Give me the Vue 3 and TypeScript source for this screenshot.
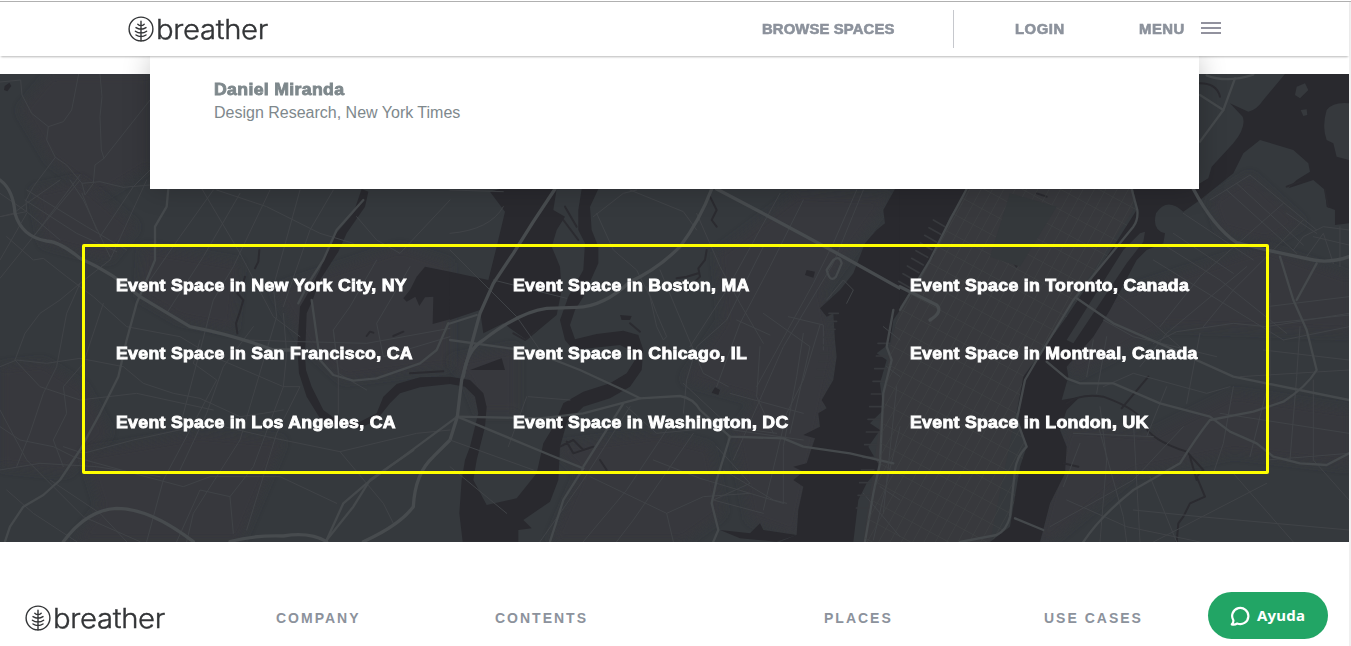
<script setup lang="ts">
interface Layer {
  id: string
  transform: string
  patches: string[]
  water: string[]
  creeks: string[]
  islands: string[]
  streets: string[]
  roads: string[]
  highways: string[]
}

const columns: string[][] = [
  ['Event Space in New York City, NY', 'Event Space in San Francisco, CA', 'Event Space in Los Angeles, CA'],
  ['Event Space in Boston, MA', 'Event Space in Chicago, IL', 'Event Space in Washington, DC'],
  ['Event Space in Toronto, Canada', 'Event Space in Montreal, Canada', 'Event Space in London, UK'],
]

const footerLinks = [
  { label: 'COMPANY', cls: 'company' },
  { label: 'CONTENTS', cls: 'contents' },
  { label: 'PLACES', cls: 'places' },
  { label: 'USE CASES', cls: 'cases' },
]

const leafPath =
  'M13 5.2V25M9.8 8.2Q11.2 9.6 13 9.6Q14.8 9.6 16.2 8.2M8 11.6Q10.2 13.2 13 13.2Q15.8 13.2 18 11.6M7.4 15.2Q9.8 17 13 17Q16.2 17 18.6 15.2M8 19Q10.2 20.6 13 20.6Q15.8 20.6 18 19'

const layers: Layer[] = [
  {
    id: 'northwest',
    transform: 'translate(0 50) scale(.33333)',
    patches: ['M150 72H450V350L300 440L150 330L60 180Z'],
    water: ['M14 108L28 98L34 108L22 124L12 120Z'],
    creeks: [],
    islands: [],
    streets: [
      'M0 96L62 90L66 135L95 190L145 230L190 215L215 180L236 72',
      'M300 72L306 140L300 200L304 300L312 325L285 345L280 400L255 435L246 400L200 345L166 322L140 270L145 230',
      'M312 325L450 150', 'M166 322L100 410L78 450L80 485', 'M240 375L100 560', 'M246 400L300 395L370 412L450 405',
      'M450 360L400 410L300 560', 'M80 420L260 530L380 600', 'M0 430L80 485L180 570', 'M0 500L80 485', 'M246 430L290 540',
    ],
    roads: [],
    highways: [],
  },
  {
    id: 'west',
    transform: 'translate(0 180) scale(.33333)',
    patches: [
      'M100 30L240 0L410 140L330 240L130 190Z', 'M430 200L720 250L700 450L540 420L420 350Z',
      'M0 560L130 545L250 620L330 760L200 880L0 860Z', 'M250 820L600 760L850 780L720 1085H220L300 980Z', 'M820 330L1200 200L1350 250V560L1030 600L920 500Z',
    ],
    water: [
      'M1275 260L1350 275V418L1298 432L1300 350L1275 352L1258 378L1246 350L1220 365L1210 355L1230 330L1250 290Z',
      'M1085 27L1105 35L1095 80L1040 160L1015 215L960 300L938 360L920 400L915 530L918 570L935 620L970 690L1010 720L1080 725L1130 700L1150 650L1190 612L1260 592L1350 590V612L1260 622L1200 640L1170 670L1130 720L1080 745L1010 740L960 715L920 650L897 580L892 500L900 380L918 350L960 270L1000 170L1060 100Z',
    ],
    creeks: ['M778 210L775 245L765 265', 'M735 290L725 325L712 340L730 360L720 395L708 430L712 460', 'M1100 468L1110 455L1120 458M1180 468L1210 455', 'M1230 580L1330 574'],
    islands: [],
    streets: [
      'M0 110L40 100L80 70L180 0', 'M20 170L100 240L130 235L200 290L280 350L380 440L540 470L640 530L850 620', 'M0 295L100 170L240 0',
      'M75 60L230 160L350 215', 'M80 100L0 240', 'M210 0L250 60L330 230', 'M0 560L50 540L140 550L240 535L370 560L430 610L520 640L600 655L720 710L790 700L850 690',
      'M45 540L75 460L120 400L180 360L240 310L330 240L440 0', 'M45 540L120 620L240 660L410 640L640 690', 'M240 310L200 400L170 560L130 640L90 760L50 860', 'M310 370L250 550L190 620L200 700L160 780L190 860',
      'M0 740L60 780L160 800L220 830L400 880L550 920L630 890L840 890L1010 970', 'M190 800L250 820L400 780L630 730L800 770L1020 815L1250 760L1350 750', 'M0 870L120 850L290 860L480 890', 'M0 690L80 840L250 1010L420 1085', 'M20 930L100 1000L230 1085', 'M150 900L300 1000L380 1085',
      'M590 0L720 220L820 410L900 470', 'M640 30L540 170L450 300', 'M720 40L610 230L500 400', 'M650 30L800 80L960 160L1060 190', 'M810 30L700 260L640 360L540 740', 'M900 30L820 320L830 410L800 510L720 780L580 1000L560 1085',
      'M1000 30L930 150L850 380', 'M1070 110L1130 180L1200 220L1350 60', 'M600 480L580 550L650 600L490 900L440 1085', 'M850 400L860 520L850 620L760 860L690 950L700 1060', 'M760 440L670 560L620 700L540 870', 'M850 620L900 620L830 760L740 1050', 'M1000 450L1015 570V700', 'M1130 240L1050 380L1000 450L1015 580L1100 630', 'M1230 260L1130 430L1150 530L1350 470', 'M740 480L900 485L1100 490L1350 445', 'M1020 815L1150 970L1180 1030', 'M690 950L600 930L530 1085',
    ],
    roads: [
      'M505 27L500 80L465 140L465 240L440 300L410 370L380 480L355 590L300 700L240 810L180 900L130 945L70 980L30 1040L15 1085', 'M935 360L960 540L1000 585L1060 602L1130 595L1260 550L1310 510L1345 430',
      'M1090 60L1010 150L970 240L925 310L895 370', 'M980 1080L1030 970L1100 910L1210 830L1372 710', 'M980 1080L1060 980L1110 900L1240 810',
    ],
    highways: [
      'M0 0Q40 30 45 100Q65 170 140 183Q180 185 240 235Q340 280 420 350L570 440Q700 465 820 510H900', 'M190 1085Q260 990 350 985Q450 985 580 1085', 'M690 1085Q760 1065 850 1068Q930 1055 980 1085', 'M1090 1085Q1200 1035 1240 980Q1245 880 1300 830L1350 780L1372 710',
    ],
  },
  {
    id: 'center',
    transform: 'translate(450 180) scale(.33333)',
    patches: [
      'M800 220L1040 40L1320 50L1120 330L1160 520L1040 1070L900 1020L850 760L920 660L700 600L820 420Z', 'M310 800L620 760L780 800L820 1000L700 1085H300L390 880Z', 'M0 540L200 500L200 700L90 700L50 600Z',
    ],
    water: [
      'M120 35L150 27H320L310 90L345 110L320 150L305 200L330 260L335 330L320 405L230 480L160 430L100 460L90 390L0 420V275L115 300L140 200L165 95Z',
      'M395 27H445L420 80L425 150L445 200V250L400 350L375 390L360 435L375 478L440 462L520 452L565 465L580 510L575 570L540 620L480 655L400 680L350 730L330 800L325 900L300 965L220 1020L245 1045L205 1050V1085H38L28 1000L35 900L45 840L60 800L85 700L75 650L45 620L0 612V590L60 600L100 640L110 680L105 740L80 840L70 900L110 975L200 955L260 880L280 790L310 740L340 670L400 635L480 610L530 580L555 540L540 510L510 495L370 510L345 480L330 420L355 350L400 270L405 190L385 150V90Z',
      'M1350 27H1335L1300 90L1305 130L1280 150L1245 190L1210 280L1170 330L1110 385L1130 410L1150 400L1155 480L1160 530L1150 600L1115 660L1130 685L1105 700L1110 740L1060 765L1095 775L1070 850L1030 860L1060 875L1030 900L1060 920L1045 990L1040 1065L990 1085H1210L1225 960L1250 910L1290 860L1255 800L1290 750L1260 730L1300 690L1290 610L1310 540L1280 520L1320 490L1330 420L1350 390Z',
      'M60 570L155 535L165 570Z', 'M1070 270L1095 275L1090 293L1065 285Z', 'M795 622L810 630L805 645L785 638Z', 'M510 405L545 408L540 420L515 420Z',
      'M810 1050L900 1060L930 1030L940 1050L1040 1065L980 1085L870 1075Z',
    ],
    creeks: ['M780 50L800 90L785 120L800 140', 'M770 210L765 240L745 265L750 290L720 320M745 280L710 290L680 295', 'M330 800L370 780L400 810L430 800L370 820L350 785', 'M340 120L385 180M345 80L380 140', 'M450 840L470 870', 'M190 460L225 480L260 450', 'M540 430L570 455'],
    islands: [],
    streets: [
      'M0 30L160 35M0 160Q120 150 160 80', 'M0 210L200 410L270 510', 'M130 300L350 355', 'M430 110L520 40L560 30', 'M440 100L490 210L560 270L600 350L620 440L640 480L650 470L620 400L590 320', 'M540 30L700 95L740 150', 'M740 100L810 260L870 370L940 490', 'M630 270L680 390L760 580L835 620', 'M940 200L830 420L740 500L710 600L700 700', 'M1060 60L960 260L870 430L800 620', 'M990 40L830 330L720 500', 'M1220 30L1150 190L1090 310L920 620', 'M1240 30L1150 250L1000 500L850 840', 'M860 420L960 465', 'M1015 410L1120 435V510', 'M1110 435L1060 600L1010 700L940 990', 'M1060 460L1040 590L1000 800V970', 'M940 400L1080 500L1020 760', 'M930 500L920 650L970 760', 'M840 640L1060 700', 'M700 610L850 750L1060 780', 'M540 680L400 900L270 1085', 'M650 750L530 930L400 1085', 'M730 760L550 1020L500 1085', 'M530 680L620 760L830 740L980 760', 'M610 840L750 895L1000 970', 'M820 870L970 960L1010 970', 'M420 890L650 1000L670 1085', 'M650 1000L760 950L900 940', 'M800 800L900 910L790 960L940 1000', 'M230 650L175 800', 'M0 860L170 1000M0 780L250 870', 'M235 650L360 660', 'M1130 360L1180 300L1210 330L1190 370', 'M1300 440L1350 480M1310 560L1350 590M1290 920L1350 960M1240 940L1350 1070', 'M1340 620L1300 1000M1350 740L1270 1080',
    ],
    roads: [
      'M-5 432L80 405', 'M20 710L270 715L400 700L570 655L690 648Q730 655 750 690L840 770L1000 775L1060 800L1200 820L1330 850', 'M22 710L180 775L300 825L400 865L340 960L300 1085', 'M840 770L800 900L785 970L805 1050L790 1085', 'M520 670L400 860', 'M1330 390L1310 500L1325 540L1300 640L1290 850L1270 940L1245 1085', 'M1130 270Q1140 310 1158 290L1175 250Q1170 225 1150 240Z', 'M0 480L250 515L390 570L520 630L570 655',
    ],
    highways: [
      'M315 27L250 125L190 220L130 310L90 400L60 510L35 600L22 710', 'M785 27Q750 120 690 200Q620 270 540 305Q460 380 380 382L290 385Q210 395 100 480Q50 510 40 590', 'M800 27L920 90L1050 160L1180 230L1350 325',
    ],
  },
  {
    id: 'east',
    transform: 'translate(900 60) scale(.33333)',
    patches: [
      'M600 720L1090 560L1350 650V820L800 800L520 950L500 900Z', 'M500 1100L760 1120L1000 1000L1350 1050V1220L1000 1180L700 1240L450 1446H410Z', 'M930 420L1050 345L1210 490L1100 550L960 510Z',
    ],
    water: [
      'M1155 42H1347V490L1305 495V450L1280 440L1275 390L1240 360L1165 385L1190 360L1230 335L1225 310L1180 270L1080 240L1030 280L1000 340L900 420L850 455Q800 410 768 460Q755 510 795 520L790 550L740 570L710 600L630 750L580 830L500 920L505 950L485 1020L540 1010L500 1050L480 1110L500 1160L495 1240L450 1330L420 1446H270L330 1400L360 1220L380 1160L350 1060L370 950L500 770L640 560L710 450L700 387H860L900 370L925 355L935 320L1000 250Q1040 200 1028 170L990 130L1045 155Q1070 150 1090 120Z',
      'M0 387H205L150 470L100 590L0 740Z',
    ],
    creeks: ['M900 70Q950 70 960 110', 'M500 1030Q540 1000 610 1010Q720 1050 730 1090Q750 1140 860 1175L910 1230L890 1250L915 1310L870 1330L850 1370L835 1390L830 1446', 'M665 1045Q720 980 745 950', 'M360 430L380 460L430 480', 'M410 400L440 410', 'M490 1210L535 1220', 'M350 590V620L335 600', 'M1160 380L1200 365', 'M1275 390L1285 440', 'M870 1190L890 1260'],
    islands: ['M1190 80L1215 70L1225 90L1200 115L1185 105Z', 'M1202 150L1220 148L1222 165L1210 168Z', 'M1347 130Q1300 125 1280 150Q1265 200 1280 240L1300 250L1310 290L1347 300Z', 'M720 520L735 515L730 545L680 610L520 850L500 840L670 570Z'],
    streets: [
      'M930 420L1050 345L1250 510', 'M1010 370L1210 555', 'M980 390L1190 580', 'M1150 430L900 650L780 800', 'M1210 480L1000 690L910 800', 'M850 460L1060 600M820 520L1000 640', 'M800 560L960 660L1160 820', 'M760 600L1020 760L1150 840', 'M1040 620L800 820L720 920', 'M650 700L760 790L850 870', 'M610 780L700 830L950 890', 'M580 840L560 950M620 830L590 1000', 'M760 850L830 815L1000 790L1100 800L1347 760', 'M900 820L860 1030', 'M1100 740L1347 710', 'M1110 790L1347 765', 'M1150 840L1347 800', 'M1090 870L1347 900', 'M1020 950L1347 930', 'M1110 700V950L1050 1190', 'M1200 800L1190 950L1170 1200', 'M1240 960V1200', 'M1000 980L970 1150L940 1240', 'M960 1060L1347 1120', 'M1100 1200L1347 1180', 'M1240 1200L1347 1320', 'M520 1120L760 1130M540 1150L490 1280', 'M590 1080L670 1370L680 1446', 'M700 1080L720 1446', 'M750 1250L830 1446', 'M1100 1270L760 1446M1000 1240L1180 1446', 'M700 1350L900 1370L1347 1410', 'M500 1320L680 1400L900 1446', 'M450 1400L700 1260L850 1100', 'M600 1446L620 1200L600 1040', 'M800 980L740 1130M990 980L920 1000L700 940L610 980', 'M1180 570L1210 530L1270 500L1347 510M1220 590L1270 520L1300 610M1320 500V620', 'M1240 530L1347 555', 'M1160 460L1250 520',
    ],
    roads: [
      'M1005 55L970 150L900 245', 'M530 715L640 790L800 860L1000 950L1347 1020', 'M440 905L500 955L540 970L640 970L780 1030L930 1070L990 1115L1070 1150L1120 1190L1200 1210L1280 1215L1347 1180', 'M550 1446Q600 1370 700 1290L840 1210Q890 1130 930 1080L1060 1055L1150 1025Q1220 980 1250 930L1220 810L1180 720L1140 590', 'M1250 610L1190 720', 'M900 105L970 150', 'M920 46Q980 70 1060 44', 'M180 1446L290 1425Q320 1410 330 1370L345 1230Q350 1190 380 1160L350 1080L375 960L410 900L520 720L700 500Q715 480 712 450L695 387', 'M200 387L150 480L90 600L0 750', 'M345 1375L430 1410',
    ],
    highways: ['M880 387Q940 500 1010 548L1100 570L1240 600Q1290 610 1347 590', 'M0 680L110 735Q130 755 90 780'],
  },
]

const avenues: string[] = []
for (let x = -300; x < 1050; x += 34) avenues.push(`M${x} 387L${x - 580} 1446`)
const crossStreets: string[] = []
for (let y = 0; y < 1500; y += 62) crossStreets.push(`M-120 ${y}L720 ${y + 455}`)
const piers: string[] = []
for (let i = 0; i < 9; i++) piers.push(`M${1165 - i * 5} ${400 + i * 24}h-28`)
for (let i = 0; i < 14; i++) piers.push(`M${1322 - i * 5} ${490 + i * 38}h-38`)
const hudsonPiers: string[] = []
for (let i = 0; i < 9; i++) hudsonPiers.push(`M${135 - i * 13} ${500 + i * 23}l-35 -20`)
</script>

<template>
  <div class="page">
    <header class="header">
      <a class="logo">
        <svg class="leaf" viewBox="0 0 26 26"><circle cx="13" cy="13" r="11.9" /><path :d="leafPath" /></svg>
        <span class="word">breather</span>
      </a>
      <nav class="nav">
        <a class="browse">BROWSE SPACES</a>
        <span class="divider"></span>
        <a class="login">LOGIN</a>
        <a class="menu">MENU</a>
        <span class="burger"><i></i><i></i><i></i></span>
      </nav>
    </header>

    <main class="hero">
      <svg class="map" viewBox="0 74 1349 468" preserveAspectRatio="none">
        <defs>
          <clipPath id="manhattan">
            <path d="M205 387L150 470L100 590L0 740L-30 860L-50 1060L-65 1230L-110 1446H270L330 1400L360 1220L380 1160L350 1060L370 950L500 770L640 560L710 450L700 387Z" />
          </clipPath>
          <filter id="haze" x="-20%" y="-20%" width="140%" height="140%"><feGaussianBlur stdDeviation="14" /></filter>
        </defs>
        <rect x="0" y="74" width="1349" height="468" fill="#35393d" />
        <g v-for="l in layers" :key="'p' + l.id" :transform="l.transform">
          <path v-for="d in l.patches" :key="d" class="patch" filter="url(#haze)" :d="d" />
          <path v-if="l.id === 'east'" class="patch" d="M205 387L0 740L-30 860L-110 1446H270L370 950L700 450V387Z" />
        </g>
        <g v-for="l in layers" :key="l.id" :transform="l.transform">
          <path v-for="d in l.water" :key="d" class="water" :d="d" />
          <path v-for="d in l.islands" :key="d" class="island" :d="d" />
          <path v-for="d in l.creeks" :key="d" class="creek" :d="d" />
          <path v-for="d in l.streets" :key="d" class="street" :d="d" />
          <g v-if="l.id === 'east'" clip-path="url(#manhattan)">
            <path class="grid" :d="avenues.join('')" />
            <path class="grid" :d="crossStreets.join('')" />
            <path class="park" d="M330 400L470 440L360 620L270 590Z" />
          </g>
          <path v-if="l.id === 'east'" class="pier" :d="hudsonPiers.join('')" />
          <path v-if="l.id === 'center'" class="pier" :d="piers.join('')" />
          <path v-for="d in l.roads" :key="d" class="road" :d="d" />
          <path v-for="d in l.highways" :key="d" class="highway" :d="d" />
        </g>
      </svg>

      <section class="quote">
        <strong class="author">Daniel Miranda</strong>
        <span class="role">Design Research, New York Times</span>
      </section>

      <section class="cities">
        <ul v-for="(col, i) in columns" :key="i">
          <li v-for="city in col" :key="city">{{ city }}</li>
        </ul>
      </section>
    </main>

    <footer class="footer">
      <a class="logo">
        <svg class="leaf" viewBox="0 0 26 26"><circle cx="13" cy="13" r="11.9" /><path :d="leafPath" /></svg>
        <span class="word">breather</span>
      </a>
      <a v-for="f in footerLinks" :key="f.cls" class="flink" :class="f.cls">{{ f.label }}</a>
    </footer>

    <button class="help">
      <svg viewBox="0 0 20 20"><path d="M3.4 14.3A8.1 8.1 0 1 1 7.2 17.5Q4.8 19 1.8 18.4Q3.6 16.8 3.4 14.3Z" /></svg>
      <span>Ayuda</span>
    </button>
    <div class="gutter"></div>
  </div>
</template>

<style>
html, body { margin: 0; overflow: hidden; background: #fff; }
</style>

<style scoped>
.page { position: relative; width: 1351px; height: 646px; overflow: hidden; background: #fff; font-family: "Liberation Sans", Arial, sans-serif; box-sizing: border-box; }
.header { position: relative; z-index: 3; display: flex; height: 56px; box-sizing: border-box; border-top: 1px solid #fff; padding-left: 128px; background: #fff; width: 1349px; box-shadow: 0 2px 2px -1px rgba(0, 0, 0, .28); }
.header::before { content: ""; position: absolute; left: 0; top: 0; width: 1351px; height: 1px; background: #b0b0b0; }
.logo { display: flex; height: 26px; }
.header .logo { margin-top: 15px; width: 634px; }
.leaf { width: 26px; height: 26px; fill: none; stroke: #333537; stroke-width: 1.4; stroke-linecap: round; }
.word { margin: 0 0 0 2px; font: 300 27.5px/26px Inter, sans-serif; letter-spacing: -.3px; color: #333537; -webkit-text-stroke: .4px #333537; transform: scaleX(1.065); transform-origin: 0 0; }
.nav { display: flex; font-weight: 700; font-size: 14px; line-height: 16px; letter-spacing: .12px; color: #8c929c; -webkit-text-stroke: .6px #8c929c; }
.nav a { margin-top: 20px; white-space: nowrap; transform: scaleX(1.06); transform-origin: 0 0; }
.browse { width: 191px; }
.divider { width: 1px; height: 38px; margin-top: 9px; background: #c6c8cd; }
.login { width: 124px; margin-left: 61px; }
.menu { width: 62px; }
.nav .login, .nav .menu { letter-spacing: .5px; }
.burger { display: flex; flex-direction: column; gap: 3px; margin-top: 21px; }
.burger i { width: 20px; height: 2px; background: #92929e; }

.hero { position: relative; height: 486px; width: 1349px; }
.map { position: absolute; left: 0; top: 18px; width: 1349px; height: 468px; }
.patch { fill: #38393d; opacity: .85; }
.water { fill: #29292e; }
.island { fill: #36393d; }
.park { fill: #34383b; }
.creek, .street, .grid, .pier, .road, .highway { fill: none; stroke-linejoin: round; stroke-linecap: round; }
.creek { stroke: #2b2b30; stroke-width: 6; }
.street { stroke: #404347; stroke-width: 3; }
.grid { stroke: #404346; stroke-width: 2.4; opacity: .8; }
.pier { stroke: #37393d; stroke-width: 5; }
.road { stroke: #45494c; stroke-width: 7; }
.highway { stroke: #474b4e; stroke-width: 10; }

.quote { position: relative; display: flex; flex-direction: column; width: 1049px; height: 133px; margin-left: 150px; padding: 24px 0 0 64px; box-sizing: border-box; background: #fff; box-shadow: 0 0 26px rgba(0, 0, 0, .22); color: #7e888c; font-size: 16px; }
.author { line-height: 20px; letter-spacing: .3px; -webkit-text-stroke: .8px #7e888c; transform: scaleX(1.105); transform-origin: 0 0; }
.role { line-height: 18px; margin-top: 4px; }
.cities { position: relative; display: grid; grid-template-columns: 397px 397px 1fr; width: 1187px; height: 230px; box-sizing: border-box; border: 3px solid #ff0; border-radius: 2px; margin: 55px 0 0 82px; padding: 29px 0 0 30.5px; }
ul { list-style: none; margin: 0; padding: 0; }
li { height: 68.4px; line-height: 20px; font-size: 16px; font-weight: 700; letter-spacing: .28px; color: #fff; -webkit-text-stroke: .85px #fff; white-space: nowrap; transform: scaleX(1.105); transform-origin: 0 0; }
li:nth-child(2) { height: 69px; margin-top: -.4px; }

.footer { display: flex; padding: 63px 0 0 25px; }
.footer .logo { width: 251px; }
.flink { margin-top: 5px; font-size: 14px; line-height: 16px; font-weight: 700; letter-spacing: 2px; color: #8c929c; white-space: nowrap; }
.company { width: 219px; }
.contents { width: 329px; }
.places { width: 220px; }
.help { position: absolute; z-index: 4; left: 1208px; top: 592px; width: 120px; height: 47px; display: flex; align-items: center; padding: 0 0 0 22px; border: 0; border-radius: 24px; background: #22a565; color: #fff; font: 700 15px/20px "Noto Sans", sans-serif; }
.help svg { width: 20px; height: 20px; margin-right: 7px; fill: none; stroke: #fff; stroke-width: 2.2; stroke-linejoin: round; }
.help span { margin-top: -1px; letter-spacing: .2px; }
.gutter { position: absolute; right: 0; top: 2px; width: 2px; height: 644px; background: #f0f0f0; }
</style>
